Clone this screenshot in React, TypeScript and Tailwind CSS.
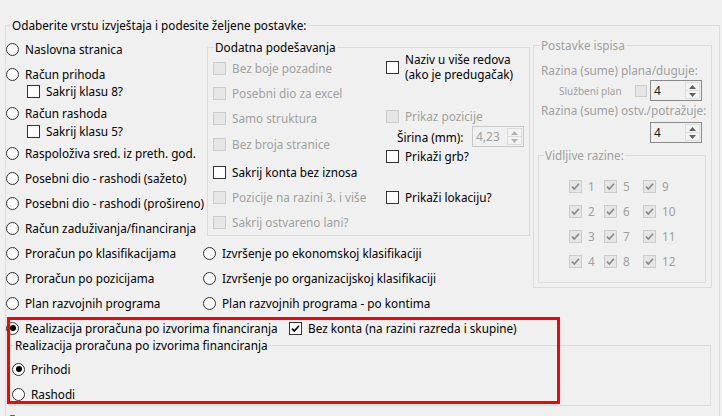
import type { ReactNode } from 'react';

const GRAY = 'text-[#a0a0a0]';

function RadioDot({ checked }: { checked?: boolean }) {
  return (
    <span className="flex size-[13px] shrink-0 items-center justify-center rounded-full border border-[#333333] bg-white">
      {checked && <span className="size-[6px] rounded-full bg-black" />}
    </span>
  );
}

function Radio({ label, checked, className = '' }: { label?: string; checked?: boolean; className?: string }) {
  return (
    <div className={`flex h-[16px] items-center gap-[6px] whitespace-nowrap ${className}`}>
      <RadioDot checked={checked} />
      {label && <span>{label}</span>}
    </div>
  );
}

function Box({ checked, disabled, size = 'size-[13px]' }: { checked?: boolean; disabled?: boolean; size?: string }) {
  return (
    <span
      className={`flex ${size} shrink-0 items-center justify-center border ${
        disabled ? 'border-[#cccccc] bg-[#e6e6e6]' : 'border-[#333333] bg-white'
      }`}
    >
      {checked && (
        <svg viewBox="0 0 11 11" className="size-[11px]">
          <path d="M2 5.6 L4.3 8 L9 2.8" fill="none" stroke={disabled ? '#8a8a8a' : '#000'} strokeWidth="1.7" />
        </svg>
      )}
    </span>
  );
}

function Check({
  label,
  checked,
  disabled,
  className = '',
}: {
  label: ReactNode;
  checked?: boolean;
  disabled?: boolean;
  className?: string;
}) {
  return (
    <div className={`flex items-center gap-[6px] whitespace-nowrap ${disabled ? GRAY : ''} ${className}`}>
      <Box checked={checked} disabled={disabled} />
      <span>{label}</span>
    </div>
  );
}

function Group({
  title,
  disabled,
  legend = '',
  className = '',
  children,
}: {
  title: string;
  disabled?: boolean;
  legend?: string;
  className?: string;
  children: ReactNode;
}) {
  return (
    <div className={`border border-[#dcdcdc] ${className}`}>
      <div className={`-mt-[9px] w-fit bg-[#f0f0f0] px-[1px] leading-[16px] whitespace-nowrap ${disabled ? GRAY : ''} ${legend}`}>
        {title}
      </div>
      {children}
    </div>
  );
}

function Arrow({ up, color }: { up?: boolean; color: string }) {
  return (
    <svg viewBox="0 0 7 4" className="h-[4px] w-[7px]">
      <path d={up ? 'M0 4 L3.5 0 L7 4 Z' : 'M0 0 L3.5 4 L7 0 Z'} fill={color} />
    </svg>
  );
}

function NumBox({ value, disabled, className = '' }: { value: string; disabled?: boolean; className?: string }) {
  const arrow = disabled ? '#b5b5b5' : '#606060';
  return (
    <div
      className={`flex h-[21px] w-[52px] shrink-0 border bg-[#f0f0f0] ${
        disabled ? 'border-[#c8c8c8] text-[#a0a0a0]' : 'border-[#8a8a8a] text-[#1a1a1a]'
      } ${className}`}
    >
      <span className="flex-1 pl-[3px] text-[12px] leading-[19px]">{value}</span>
      <div className="my-[1px] mr-[1px] flex w-[15px] flex-col">
        <div className="flex flex-1 items-center justify-center border border-[#dcdcdc] bg-[#f3f3f3]">
          <Arrow up color={arrow} />
        </div>
        <div className="flex flex-1 items-center justify-center border border-t-0 border-[#dcdcdc] bg-[#f3f3f3]">
          <Arrow color={arrow} />
        </div>
      </div>
    </div>
  );
}

const LEVELS = [1, 5, 9, 2, 6, 10, 3, 7, 11, 4, 8, 12];

export default function App() {
  return (
    <div className="relative h-[416px] w-[722px] overflow-hidden bg-[#f0f0f0] pl-[5px] pt-[25px] font-['Noto_Sans',sans-serif] text-[11.75px] leading-[16px] text-black">
      <Group title="Odaberite vrstu izvještaja i podesite željene postavke:" legend="ml-[5px]" className="h-[430px] w-[715px]">
        <div className="flex items-start">
          {/* left part */}
          <div className="flex w-[527px] flex-col">
            <div className="flex items-start">
              <div className="flex w-[201px] flex-col">
                <Radio label="Naslovna stranica" className="mt-[8px]" />
                <Radio label="Račun prihoda" className="mt-[9px]" />
                <Check label="Sakrij klasu 8?" className="mt-[1px] h-[16px] pl-[21px]" />
                <Radio label="Račun rashoda" className="mt-[6px]" />
                <Check label="Sakrij klasu 5?" className="mt-[2px] h-[16px] pl-[21px]" />
                <Radio label="Raspoloživa sred. iz preth. god." className="mt-[6px]" />
                <Radio label="Posebni dio - rashodi (sažeto)" className="mt-[9px]" />
                <Radio label="Posebni dio - rashodi (prošireno)" className="mt-[9px]" />
                <Radio label="Račun zaduživanja/financiranja" className="mt-[9px]" />
              </div>

              <Group title="Dodatna podešavanja" legend="ml-[6px]" className="mt-[14px] h-[189px] w-[323px]">
                <div className="flex items-start">
                  <div className="flex w-[178px] flex-col pl-[5px]">
                    <Check disabled label="Bez boje pozadine" className="mt-[5px] h-[16px]" />
                    <Check disabled label="Posebni dio za excel" className="mt-[9px] h-[16px]" />
                    <Check disabled label="Samo struktura" className="mt-[9px] h-[16px]" />
                    <Check disabled label="Bez broja stranice" className="mt-[10px] h-[16px]" />
                    <Check label="Sakrij konta bez iznosa" className="mt-[12px] h-[16px]" />
                    <Check disabled label="Pozicije na razini 3. i više" className="mt-[9px] h-[16px]" />
                    <Check disabled label="Sakrij ostvareno lani?" className="mt-[9px] h-[16px]" />
                  </div>
                  <div className="flex flex-col">
                    <Check
                      className="-mt-[3px] leading-[15px]"
                      label={
                        <>
                          Naziv u više redova
                          <br />
                          (ako je predugačak)
                        </>
                      }
                    />
                    <Check disabled label="Prikaz pozicije" className="mt-[26px] h-[16px]" />
                    <div className="mt-[2px] flex h-[21px] items-center pl-[11px]">
                      <span className="w-[75px] whitespace-nowrap">Širina (mm):</span>
                      <NumBox value="4,23" disabled className="w-[50px]" />
                    </div>
                    <Check label="Prikaži grb?" className="mt-[1px] h-[16px]" />
                    <Check label="Prikaži lokaciju?" className="mt-[25px] h-[16px]" />
                  </div>
                </div>
              </Group>
            </div>

            <div className="mt-[9px] flex">
              <Radio label="Proračun po klasifikacijama" className="w-[197px]" />
              <Radio label="Izvršenje po ekonomskoj klasifikaciji" />
            </div>
            <div className="mt-[9px] flex">
              <Radio label="Proračun po pozicijama" className="w-[197px]" />
              <Radio label="Izvršenje po organizacijskoj klasifikaciji" />
            </div>
            <div className="mt-[9px] flex">
              <Radio label="Plan razvojnih programa" className="w-[197px]" />
              <Radio label="Plan razvojnih programa - po kontima" />
            </div>
            <div className="mt-[9px] flex">
              <Radio checked label="Realizacija proračuna po izvorima financiranja" className="w-[283px]" />
              <Check checked label="Bez konta (na razini razreda i skupine)" className="h-[16px]" />
            </div>
          </div>

          {/* right column */}
          <Group title="Postavke ispisa" disabled legend="ml-[6px]" className="mt-[12px] h-[243px] w-[179px]">
            <div className={`flex flex-col ${GRAY}`}>
              <div className="mt-[9px] pl-[7px] whitespace-nowrap">Razina (sume) plana/duguje:</div>
              <div className="mt-[2px] flex h-[21px] items-center pl-[25px]">
                <span className="w-[76px] text-[10px] whitespace-nowrap">Službeni plan</span>
                <Box disabled size="size-[12px]" />
                <NumBox value="4" className="ml-[3px]" />
              </div>
              <div className="mt-[1px] pl-[7px] whitespace-nowrap">Razina (sume) ostv./potražuje:</div>
              <NumBox value="4" className="ml-[116px] mt-[4px]" />
              <Group title="Vidljive razine:" disabled legend="ml-[5px]" className="ml-[4px] mt-[12px] h-[128px] w-[168px]">
                <div className="mt-[15px] grid grid-cols-[35px_39px_40px] gap-y-[9px] pl-[30px]">
                  {LEVELS.map((n) => (
                    <Check key={n} checked disabled label={n} className="h-[16px]" />
                  ))}
                </div>
              </Group>
            </div>
          </Group>
        </div>

        <Group
          title="Realizacija proračuna po izvorima financiranja"
          legend="ml-[5px]"
          className="ml-[2px] mt-[9px] h-[61px] w-[703px]"
        >
          <Radio checked label="Prihodi" className="mt-[8px] pl-[3px]" />
          <Radio label="Rashodi" className="mt-[9px] pl-[3px]" />
        </Group>
        <Radio className="mt-[7px]" />
      </Group>

      <div className="absolute left-[7px] top-[317px] h-[87px] w-[553px] border-[3px] border-[#ff0000]" />
    </div>
  );
}
